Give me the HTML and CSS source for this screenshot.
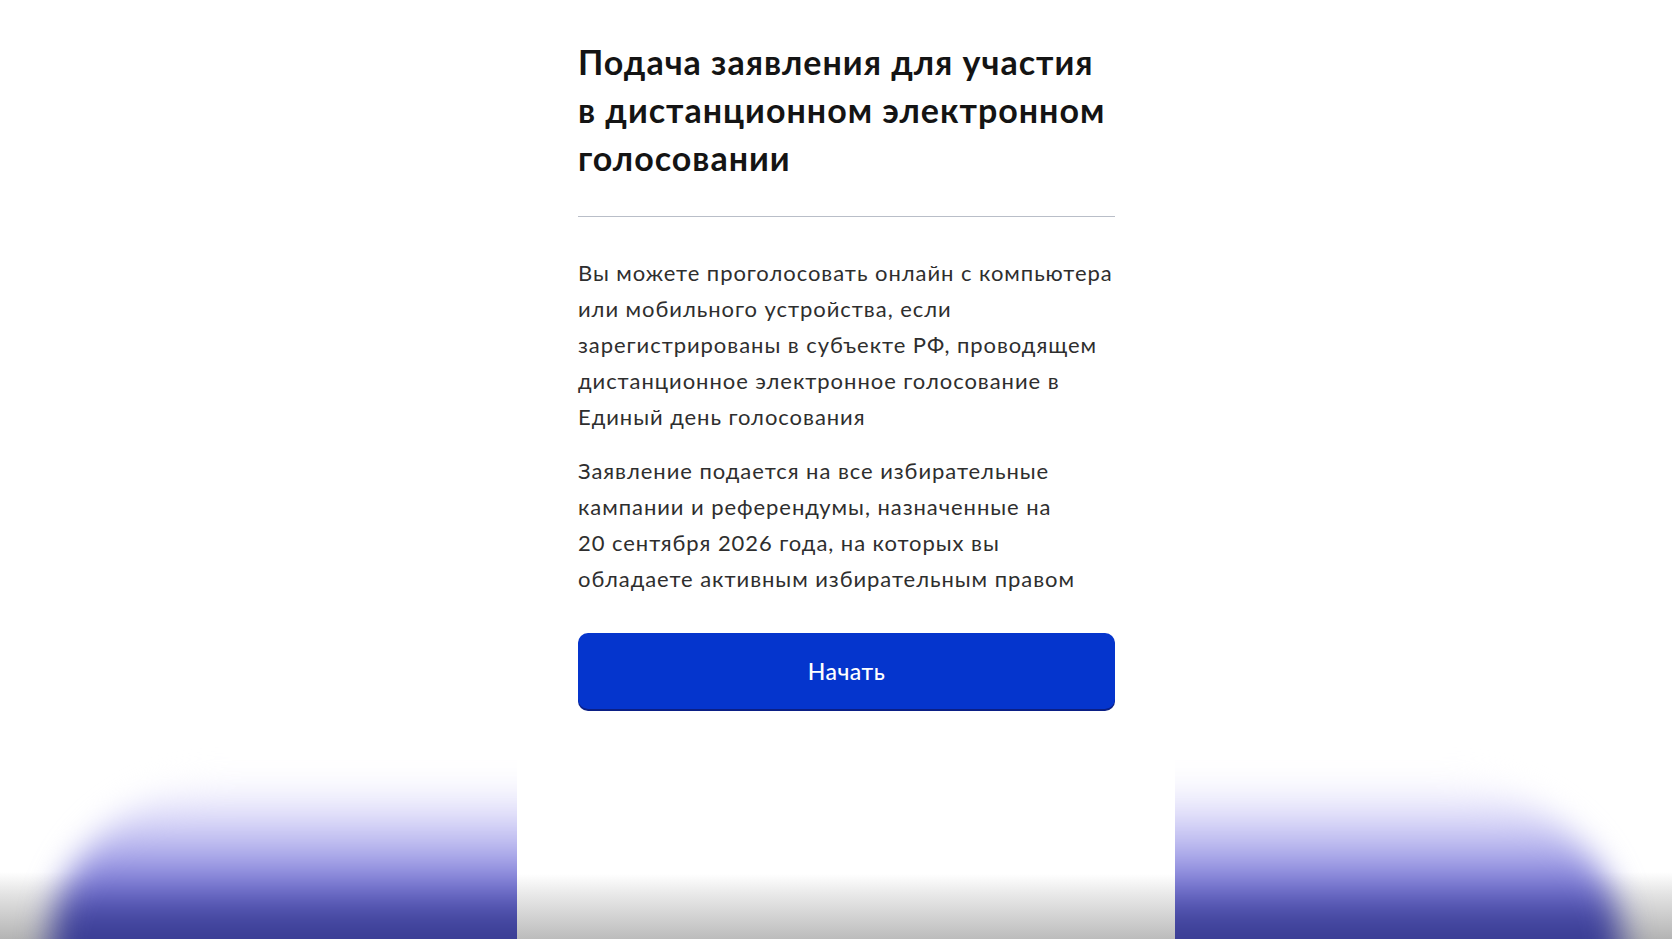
FILE: index.html
```html
<!DOCTYPE html>
<html lang="ru">
<head>
<meta charset="utf-8">
<title>Подача заявления</title>
<link rel="stylesheet" href="styles.css">
</head>
<body>
<div class="page">
  <div class="side side-left"><div class="blob"></div></div>
  <main class="screen">
    <h1 class="title">Подача заявления для участия<br>в дистанционном электронном<br>голосовании</h1>
    <hr class="divider">
    <p class="text">Вы можете проголосовать онлайн с компьютера<br>или мобильного устройства, если<br>зарегистрированы в субъекте РФ, проводящем<br>дистанционное электронное голосование в<br>Единый день голосования</p>
    <p class="text text-second">Заявление подается на все избирательные<br>кампании и референдумы, назначенные на<br>20 сентября 2026 года, на которых вы<br>обладаете активным избирательным правом</p>
    <button class="btn" type="button">Начать</button>
  </main>
  <div class="side side-right"><div class="blob"></div></div>
</div>
</body>
</html>
```

FILE: styles.css
```css
html, body {
  margin: 0;
  padding: 0;
  height: 100%;
}
body {
  font-family: Lato, "Noto Sans", sans-serif;
  background: #fff;
}
.page {
  display: flex;
  height: 939px;
  overflow: hidden;
  background: linear-gradient(to bottom, #ffffff 0, #ffffff 872px, #e2e2e2 895px, #b4b4b4 939px);
}
.side {
  display: flex;
  flex-direction: column;
  justify-content: flex-end;
  overflow: hidden;
}
.side-left {
  width: 517px;
  flex: none;
}
.side-right {
  flex: 1;
}
.blob {
  height: 224px;
  margin-bottom: -65px;
  background: linear-gradient(to bottom,
    rgba(244,244,255,0) 0%,
    #f2f1fd 8%,
    #e2e0fa 15%,
    #d0cef6 22%,
    #b2b0ec 32%,
    #8f8de0 42%,
    #6a69c8 50%,
    #4c4ea8 58%,
    #3c3f97 65%,
    #333689 100%);
  filter: blur(16px);
}
.side-left .blob {
  margin-left: 50px;
  margin-right: -60px;
  border-top-left-radius: 190px 170px;
}
.side-right .blob {
  margin-right: 50px;
  margin-left: -60px;
  border-top-right-radius: 190px 170px;
}
.screen {
  width: 658px;
  flex: none;
  box-sizing: border-box;
  padding: 38px 20px 0 61px;
  background: linear-gradient(to bottom, #ffffff 0, #ffffff 874px, #e8e8e8 895px, #bcbcbc 939px);
  display: flex;
  flex-direction: column;
  align-items: flex-start;
}
.title {
  margin: 0;
  font-size: 34px;
  line-height: 48px;
  font-weight: 700;
  color: #141414;
  letter-spacing: 1px;
  white-space: nowrap;
}
.divider {
  align-self: stretch;
  margin: 34px 40px 0 0;
  border: 0;
  height: 1px;
  background: #b9bec8;
}
.text {
  margin: 38px 0 0;
  font-size: 22px;
  line-height: 36px;
  color: #2e2e2e;
  letter-spacing: 0.95px;
  white-space: nowrap;
}
.text-second {
  margin-top: 18px;
}
.btn {
  align-self: stretch;
  margin: 36px 40px 0 0;
  height: 76px;
  border: 0;
  border-radius: 10px;
  background: #0535cd;
  box-shadow: 0 2px 0 #0b1f85;
  color: #fff;
  font-family: Lato, "Noto Sans", sans-serif;
  font-size: 23px;
  letter-spacing: 0.5px;
  font-weight: 500;
  cursor: pointer;
}
```
